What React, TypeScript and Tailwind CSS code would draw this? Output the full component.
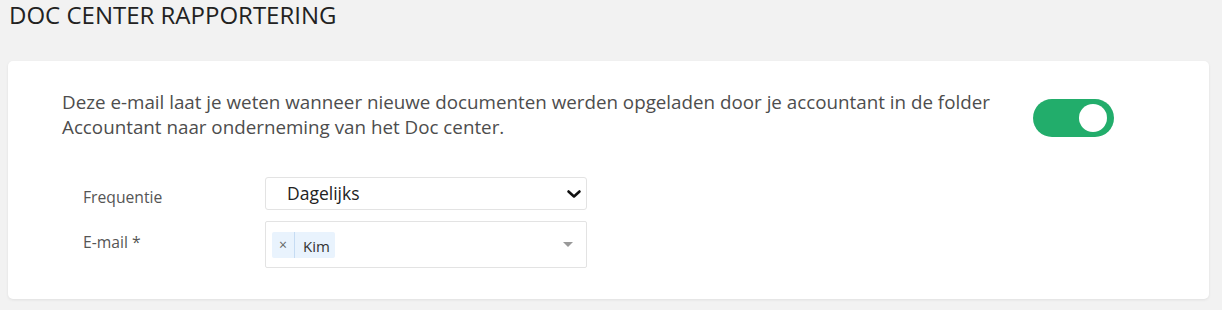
import React from 'react';

export default function App() {
    return (
        <div className="min-h-[310px] bg-[#f2f2f2] px-2" style={{ fontFamily: '"Open Sans", sans-serif' }}>
            <h1 className="pl-[1px] text-[24px] leading-[30px] text-[#222]">DOC CENTER RAPPORTERING</h1>
            <div className="mt-[31px] w-[1201px] rounded-[5px] bg-white pl-[54px] pr-[95px] pt-[29px] pb-[31px] shadow-[0_1px_3px_rgba(0,0,0,0.08)]">
                <div className="flex items-start justify-between">
                    <p className="w-[945px] text-[18.8px] leading-[25px] text-[#4d4d4d]">
                        Deze e-mail laat je weten wanneer nieuwe documenten werden opgeladen door je accountant in de folder Accountant naar onderneming van het Doc center.
                    </p>
                    <button className="mt-[9px] flex h-[38px] w-[81px] items-center justify-end rounded-full bg-[#22ad6b] pr-[7px]">
                        <span className="h-[28px] w-[28px] rounded-full bg-white" />
                    </button>
                </div>
                <div className="mt-[37px] grid grid-cols-[182px_322px] gap-y-[11px] pl-[21px]">
                    <label className="pt-[10px] text-[15.7px] leading-[20px] text-[#555]">Frequentie</label>
                    <div className="flex h-[33px] items-center justify-between rounded-[3px] border border-[#e3e3e3] pl-[21px] pr-[4px] text-[17.5px] text-[#222]">
                        <span>Dagelijks</span>
                        <svg width="16" height="10" viewBox="0 0 16 10" className="text-[#111]">
                            <path d="M2.5 2.5l5.5 5 5.5-5" fill="none" stroke="currentColor" strokeWidth="2.6" strokeLinecap="round" strokeLinejoin="round" />
                        </svg>
                    </div>
                    <label className="pt-[11px] text-[15.7px] leading-[20px] text-[#555]">E-mail *</label>
                    <div className="flex h-[47px] items-center justify-between rounded-[2px] border border-[#e3e3e3] pl-[6px] pr-[13px]">
                        <div className="flex h-[26px] items-stretch rounded-[2px] bg-[#e9f3fd] text-[15px] text-[#333]">
                            <span className="flex w-[23px] items-center justify-center border-r border-[#c6dcf3] text-[14px] text-[#666]">×</span>
                            <span className="flex items-center pl-[8px] pr-[5px] pt-[3px]">Kim</span>
                        </div>
                        <span className="h-0 w-0 border-x-[5px] border-t-[5px] border-x-transparent border-t-[#999]" />
                    </div>
                </div>
            </div>
        </div>
    );
}
